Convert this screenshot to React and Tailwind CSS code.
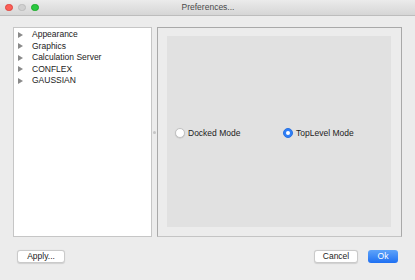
import React from "react";

const font = { fontFamily: '"Liberation Sans", Arial, sans-serif' };

function Tri() {
  return (
    <svg width="5" height="6" viewBox="0 0 5 6" className="shrink-0">
      <polygon points="0,0 5,3 0,6" fill="#8a8a8a" />
    </svg>
  );
}

export default function App() {
  const items = ["Appearance", "Graphics", "Calculation Server", "CONFLEX", "GAUSSIAN"];
  return (
    <div className="w-[415px] h-[280px] bg-[#ececec] flex flex-col overflow-hidden text-[8.5px] text-[#222]" style={font}>
      <div className="h-[16px] shrink-0 flex items-center relative bg-gradient-to-b from-[#ebebeb] to-[#d6d6d6] border-b border-[#bdbdbd]">
        <div className="flex gap-[5.5px] pl-[5px]">
          <div className="w-[7.5px] h-[7.5px] rounded-full bg-[#fc5f57] border-[0.5px] border-[#e0443e]" />
          <div className="w-[7.5px] h-[7.5px] rounded-full bg-[#d0d0d0] border-[0.5px] border-[#bcbcbc]" />
          <div className="w-[7.5px] h-[7.5px] rounded-full bg-[#2ac840] border-[0.5px] border-[#1aab29]" />
        </div>
        <div className="absolute inset-0 flex items-center justify-center text-[#4a4a4a] pl-[1px]">Preferences...</div>
      </div>
      <div className="flex pt-[11px] pl-[13px]">
        <div className="w-[139px] h-[210px] bg-white border border-[#c6c6c6] pt-[1px]">
          {items.map((t) => (
            <div key={t} className="h-[11.5px] flex items-center pl-[4px]">
              <Tri />
              <span className="ml-[9px]">{t}</span>
            </div>
          ))}
        </div>
        <div className="w-[5px] h-[210px] flex items-center justify-center">
          <div className="w-[3px] h-[3px] rounded-full bg-[#c4c4c4]" />
        </div>
        <div className="w-[245px] h-[210px] border border-[#a9a9a9] border-b-[#c4c4c4] pl-[9px] pt-[8px] pr-[10px] pb-[9px]">
          <div className="w-full h-full bg-[#e1e1e1] flex items-center pt-[3px]">
            <div className="flex items-center ml-[8px] w-[108px]">
              <div className="w-[10px] h-[10px] rounded-full bg-white border border-[#c2c2c2] shadow-[0_0.5px_1px_rgba(0,0,0,0.15)]" />
              <span className="ml-[3px]">Docked Mode</span>
            </div>
            <div className="flex items-center">
              <div className="w-[10px] h-[10px] rounded-full bg-[#2f7ff7] border border-[#2a72e0] flex items-center justify-center">
                <div className="w-[4px] h-[4px] rounded-full bg-white" />
              </div>
              <span className="ml-[3px]">TopLevel Mode</span>
            </div>
          </div>
        </div>
      </div>
      <div className="flex items-center mt-[13px] pl-[17px] pr-[17px]">
        <div className="w-[48px] h-[12.5px] bg-white border border-[#cacaca] rounded-[3px] shadow-[0_0.5px_1px_rgba(0,0,0,0.12)] flex items-center justify-center">Apply...</div>
        <div className="flex-1" />
        <div className="w-[44px] h-[12.5px] bg-white border border-[#cacaca] rounded-[3px] shadow-[0_0.5px_1px_rgba(0,0,0,0.12)] flex items-center justify-center">Cancel</div>
        <div className="w-[30px] h-[12.5px] ml-[10px] rounded-[3px] bg-gradient-to-b from-[#5ea3f9] to-[#1d6ff2] text-white flex items-center justify-center">Ok</div>
      </div>
    </div>
  );
}
